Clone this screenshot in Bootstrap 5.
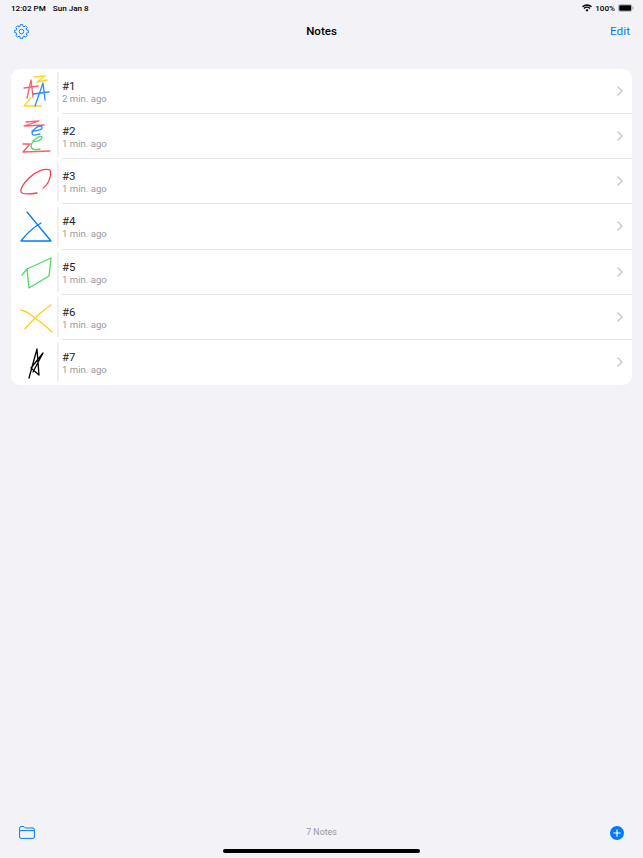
<!DOCTYPE html>
<html lang="en">
<head>
<meta charset="UTF-8" />
<title>Notes</title>
<link href="https://cdn.jsdelivr.net/npm/bootstrap@5.3.0/dist/css/bootstrap.min.css" rel="stylesheet">
<style>
    html, body { height: 100%; }
    body {
        background: #f2f2f7;
        color: #000;
        font-family: Roboto, "Liberation Sans", sans-serif;
        overflow: hidden;
    }
    .app-screen { height: 858px; }
    .status-bar { height: 15px; padding: 1px 9px 0 11px; font-size: 8.1px; font-weight: 500; line-height: 15px; }
    .status-date { margin-left: 7px; }
    .battery-text { margin: 0 3px 0 3px; }
    .nav-bar { height: 32px; padding: 0 13px 0 14px; }
    .nav-title { font-size: 11.5px; font-weight: 500; margin-top: .5px; }
    .nav-edit { font-size: 11.8px; color: #007aff; margin-top: 1px; }
    .notes-list { margin: 22px 11px 0; border-radius: 9px; background: #fff; overflow: hidden; }
    .note-row { height: 45.14px; padding: 0; border: 0; background: transparent; }
    .thumb-box { width: 46px; height: 45px; flex: none; }
    .thumb-rule { width: 1.5px; height: 40px; background: #f0f0f3; flex: none; margin-right: 3.500px; }
    .note-body { height: 100%; padding-right: 9px; border-bottom: 1px solid #e3e3e7; }
    .note-row:last-child .note-body { border-bottom: 0; }
    .note-text { padding-top: 3px; }
    .note-name { font-size: 11.5px; line-height: 13px; }
    .note-time { font-size: 9.6px; line-height: 12px; color: #98989d; }
    .tool-bar { height: 36px; margin-top: auto; padding: 0 19px 15px 19px; }
    .tool-count { font-size: 8.8px; color: #98989d; }
    .home-bar { position: absolute; left: 223px; top: 849px; width: 197px; height: 4px; border-radius: 2px; background: #000; }
    .sketch { fill: none; stroke-width: 1.3; stroke-linecap: round; stroke-linejoin: round; }
</style>
</head>
<body>
<div class="app-screen d-flex flex-column position-relative">

    <div class="status-bar d-flex align-items-center">
        <span>12:02 PM</span>
        <span class="status-date">Sun Jan 8</span>
        <span class="ms-auto d-flex align-items-center">
            <svg width="10" height="8" viewBox="0 0 20 15"><path d="M10 15 6.8 11.4a4.6 4.6 0 0 1 6.4 0zM4.9 9.4 3 7.3a10 10 0 0 1 14 0l-1.900 2.100a7.300 7.300 0 0 0-10.200 0zM1.900 6 0 3.900a14.500 14.500 0 0 1 20 0L18.100 6a11.800 11.800 0 0 0-16.200 0z"/></svg>
            <span class="battery-text">100%</span>
            <svg width="16" height="8" viewBox="0 0 16 8"><rect x=".4" y=".4" width="13.600" height="7.200" rx="2" fill="none" stroke="#a0a0a3" stroke-width=".7"/><rect x="1.200" y="1.200" width="12" height="5.600" rx="1.200"/><path d="M14.800 2.800c.6.200.9.600.9 1.200s-.3 1-.9 1.200z" fill="#a0a0a3"/></svg>
        </span>
    </div>

    <div class="nav-bar d-flex align-items-center justify-content-between position-relative">
        <svg width="15" height="15" viewBox="-8 -8 16 16" fill="none" stroke="#007aff" stroke-width="1" stroke-linejoin="round">
            <path d="M-1.640-5.350-1.280-7.290H1.280L1.640-5.350 2.620-4.940 4.250-6.060 6.060-4.250 4.940-2.620 5.350-1.640 7.290-1.280V1.280L5.350 1.640 4.940 2.620 6.060 4.250 4.250 6.060 2.620 4.940 1.640 5.350 1.280 7.290H-1.280L-1.640 5.350-2.620 4.940-4.250 6.060-6.060 4.250-4.940 2.620-5.350 1.640-7.290 1.280V-1.280L-5.350-1.640-4.940-2.620-6.060-4.250-4.250-6.060-2.620-4.940z"/>
            <circle r="2.400"/>
        </svg>
        <span class="nav-title position-absolute top-50 start-50 translate-middle">Notes</span>
        <span class="nav-edit">Edit</span>
    </div>

    <ul class="list-group notes-list">
        <li class="list-group-item note-row d-flex align-items-center">
            <svg class="thumb-box" viewBox="11 69 46 45">
                <g class="sketch">
                    <path stroke="#ffd426" d="M34 77 45 76 37 82 47 80M31 98 24 106H41"/>
                    <path stroke="#ff5c6c" d="M27 98 31 80 33 97M24 88 38 86"/>
                    <path stroke="#2b8cff" d="M35 106 43 83 45 100M33 94 49 92"/>
                </g>
            </svg>
            <div class="thumb-rule"></div>
            <div class="note-body flex-grow-1 d-flex align-items-center justify-content-between">
                <div class="note-text"><div class="note-name">#1</div><div class="note-time">2 min. ago</div></div>
                <svg width="6" height="10" viewBox="0 0 6 10" fill="none" stroke="#c4c4c7" stroke-width="1.300" stroke-linecap="round" stroke-linejoin="round"><path d="M1 1 5 5 1 9"/></svg>
            </div>
        </li>
        <li class="list-group-item note-row d-flex align-items-center">
            <svg class="thumb-box" viewBox="11 114 46 45">
                <g class="sketch">
                    <path stroke="#ff5c6c" d="M26 122 39 121 24 126 44 125M23 144 30 144 23 152 50 151"/>
                    <path stroke="#2b8cff" d="M32 131C36 131 43 130 42 127 40 124 33 129 32 133 32 137 38 134 40 134"/>
                    <path stroke="#4cd964" d="M33 141C37 142 42 140 42 137 40 135 32 140 31 146 31 150 36 150 40 149"/>
                </g>
            </svg>
            <div class="thumb-rule"></div>
            <div class="note-body flex-grow-1 d-flex align-items-center justify-content-between">
                <div class="note-text"><div class="note-name">#2</div><div class="note-time">1 min. ago</div></div>
                <svg width="6" height="10" viewBox="0 0 6 10" fill="none" stroke="#c4c4c7" stroke-width="1.300" stroke-linecap="round" stroke-linejoin="round"><path d="M1 1 5 5 1 9"/></svg>
            </div>
        </li>
        <li class="list-group-item note-row d-flex align-items-center">
            <svg class="thumb-box" viewBox="11 159 46 45">
                <path class="sketch" stroke="#ff3b4e" d="M43 188C48 185 52 176 50 170 45 168 36 171 29 178 24 183 20 189 21 192 23 195 31 194 37 193"/>
            </svg>
            <div class="thumb-rule"></div>
            <div class="note-body flex-grow-1 d-flex align-items-center justify-content-between">
                <div class="note-text"><div class="note-name">#3</div><div class="note-time">1 min. ago</div></div>
                <svg width="6" height="10" viewBox="0 0 6 10" fill="none" stroke="#c4c4c7" stroke-width="1.300" stroke-linecap="round" stroke-linejoin="round"><path d="M1 1 5 5 1 9"/></svg>
            </div>
        </li>
        <li class="list-group-item note-row d-flex align-items-center">
            <svg class="thumb-box" viewBox="11 204 46 45">
                <path class="sketch" stroke="#007aff" d="M27 212 51 241 21 241C27 233 34 227 41 223"/>
            </svg>
            <div class="thumb-rule"></div>
            <div class="note-body flex-grow-1 d-flex align-items-center justify-content-between">
                <div class="note-text"><div class="note-name">#4</div><div class="note-time">1 min. ago</div></div>
                <svg width="6" height="10" viewBox="0 0 6 10" fill="none" stroke="#c4c4c7" stroke-width="1.300" stroke-linecap="round" stroke-linejoin="round"><path d="M1 1 5 5 1 9"/></svg>
            </div>
        </li>
        <li class="list-group-item note-row d-flex align-items-center">
            <svg class="thumb-box" viewBox="11 249 46 45">
                <path class="sketch" stroke="#4cd964" d="M22 274 27 268 51 257 49 275 29 287 27 268"/>
            </svg>
            <div class="thumb-rule"></div>
            <div class="note-body flex-grow-1 d-flex align-items-center justify-content-between">
                <div class="note-text"><div class="note-name">#5</div><div class="note-time">1 min. ago</div></div>
                <svg width="6" height="10" viewBox="0 0 6 10" fill="none" stroke="#c4c4c7" stroke-width="1.300" stroke-linecap="round" stroke-linejoin="round"><path d="M1 1 5 5 1 9"/></svg>
            </div>
        </li>
        <li class="list-group-item note-row d-flex align-items-center">
            <svg class="thumb-box" viewBox="11 294 46 45">
                <path class="sketch" stroke="#ffcc1f" d="M21 309C27 310 31 314 35 317 41 321 47 326 52 331M51 304C44 309 39 313 35 317 31 321 28 324 25 328"/>
            </svg>
            <div class="thumb-rule"></div>
            <div class="note-body flex-grow-1 d-flex align-items-center justify-content-between">
                <div class="note-text"><div class="note-name">#6</div><div class="note-time">1 min. ago</div></div>
                <svg width="6" height="10" viewBox="0 0 6 10" fill="none" stroke="#c4c4c7" stroke-width="1.300" stroke-linecap="round" stroke-linejoin="round"><path d="M1 1 5 5 1 9"/></svg>
            </div>
        </li>
        <li class="list-group-item note-row d-flex align-items-center">
            <svg class="thumb-box" viewBox="11 339 46 45">
                <path class="sketch" stroke="#000" d="M29 377 37 348 39 374 31 367 43 352 33 371"/>
            </svg>
            <div class="thumb-rule"></div>
            <div class="note-body flex-grow-1 d-flex align-items-center justify-content-between">
                <div class="note-text"><div class="note-name">#7</div><div class="note-time">1 min. ago</div></div>
                <svg width="6" height="10" viewBox="0 0 6 10" fill="none" stroke="#c4c4c7" stroke-width="1.300" stroke-linecap="round" stroke-linejoin="round"><path d="M1 1 5 5 1 9"/></svg>
            </div>
        </li>
    </ul>

    <div class="tool-bar d-flex align-items-center justify-content-between position-relative">
        <svg width="16" height="13" viewBox="0 0 16 13" fill="none" stroke="#007aff" stroke-width="1" stroke-linejoin="round"><path d="M.6 2C.6 1.100 1.200.6 2 .6H5L6.400 2H14C14.900 2 15.400 2.500 15.400 3.400V11C15.400 11.900 14.900 12.400 14 12.400H2C1.100 12.400.6 11.900.6 11zM.6 4.600H15.400"/></svg>
        <span class="tool-count position-absolute start-50 translate-middle-x">7 Notes</span>
        <svg width="14" height="14" viewBox="0 0 14 14"><circle cx="7" cy="7" r="7" fill="#007aff"/><path d="M7 3.800V10.200M3.800 7H10.200" stroke="#fff" stroke-width="1.200" stroke-linecap="round"/></svg>
    </div>

    <div class="home-bar"></div>
</div>
<script src="https://cdn.jsdelivr.net/npm/bootstrap@5.3.0/dist/js/bootstrap.bundle.min.js"></script>
</body>
</html>
